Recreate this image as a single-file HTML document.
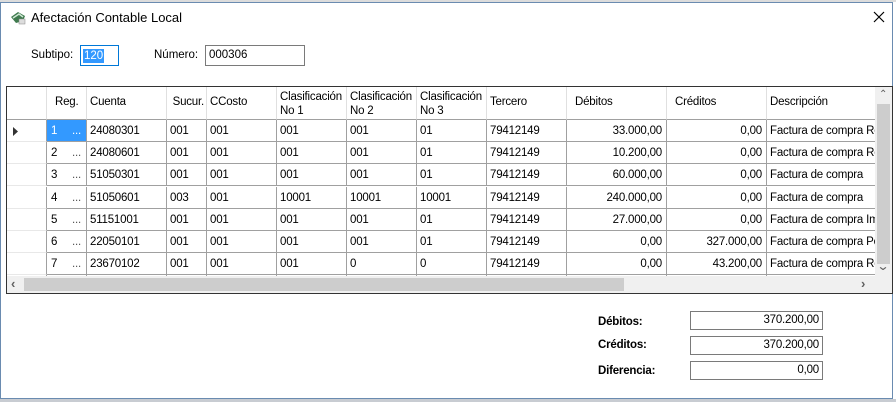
<!DOCTYPE html>
<html><head><meta charset="utf-8"><style>
*{margin:0;padding:0;box-sizing:border-box}
body{width:896px;height:402px;background:#fff;font-family:"Liberation Sans",Arial,sans-serif;font-size:11.5px;color:#000;position:relative;overflow:hidden}
.a{position:absolute}
.win{left:0;top:2px;width:893px;height:397px;border:1px solid #6a8bb0;background:#fff}
.c{position:absolute;height:22px;line-height:22px;white-space:nowrap;overflow:hidden;padding-left:3px;border-right:1px solid #a0a0a0;border-bottom:1px solid #a0a0a0;letter-spacing:-0.2px}
.r{text-align:right;padding-right:4px;padding-left:0}
.h{height:33px;line-height:14px;padding-top:3px;border-right:1px solid #e0e0e0;border-bottom:1px solid #a0a0a0}
.tb{position:absolute;border:1px solid #7a7a7a;height:19px;line-height:17px;text-align:right;padding-right:3px;background:#fff;letter-spacing:-0.2px}
.lb{position:absolute;font-weight:bold;letter-spacing:-0.2px}
</style></head><body>
<div class="a" style="left:0;top:0;width:896px;height:2px;background:#dcdcdc"></div>
<div class="a" style="left:0;top:399px;width:896px;height:3px;background:#c8ccd2"></div>
<div class="a win"></div>
<svg class="a" style="left:9px;top:9px" width="18" height="16" viewBox="0 0 18 16"><path d="M2 8 L9 3 L16 7 L14 12 L7 14 Z" fill="#3f7a4e"/><path d="M4 9 L10 5 L14 8" stroke="#cfe8d4" stroke-width="1.5" fill="none"/><rect x="10" y="10" width="6" height="5" fill="#ddd" stroke="#888" stroke-width=".5"/></svg>
<div class="a" style="left:31px;top:10px;font-size:13px">Afectación Contable Local</div>
<svg class="a" style="left:873px;top:11px" width="12" height="12"><path d="M1 1 L11 11 M11 1 L1 11" stroke="#000" stroke-width="1.2"/></svg>
<div class="a" style="left:31px;top:49px">Subtipo:</div>
<div class="a" style="left:80px;top:45px;width:39px;height:21px;border:1px solid #0078d7;background:#fff"><span style="position:absolute;left:2px;top:3px;background:#3399ff;color:#fff;line-height:14px;padding:0 1px">120</span></div>
<div class="a" style="left:154px;top:49px">Número:</div>
<div class="a" style="left:205px;top:45px;width:100px;height:21px;border:1px solid #7a7a7a;line-height:19px;padding-left:3px">000306</div>

<div class="a" style="left:6px;top:86px;width:887px;height:208px;border:1px solid #333;background:#fff;overflow:hidden">
<div id="g"></div>
</div>
<script>
var cols=[[0,40],[40,40],[80,80],[160,40],[200,70],[270,70],[340,70],[410,70],[480,80],[560,100],[660,100],[760,110]];
var hd=["","Reg.","Cuenta","Sucur.","CCosto","Clasificación<br>No 1","Clasificación<br>No 2","Clasificación<br>No 3","Tercero","Débitos","Créditos","Descripción"];
var rows=[
["1","24080301","001","001","001","001","01","79412149","33.000,00","0,00","Factura de compra Re"],
["2","24080601","001","001","001","001","01","79412149","10.200,00","0,00","Factura de compra Re"],
["3","51050301","001","001","001","001","01","79412149","60.000,00","0,00","Factura de compra"],
["4","51050601","003","001","10001","10001","10001","79412149","240.000,00","0,00","Factura de compra"],
["5","51151001","001","001","001","001","01","79412149","27.000,00","0,00","Factura de compra Imp"],
["6","22050101","001","001","001","001","01","79412149","0,00","327.000,00","Factura de compra Po"],
["7","23670102","001","001","001","0","0","79412149","0,00","43.200,00","Factura de compra Re"],
["","","","","","","","","","",""]];
var h="";
for(var i=0;i<cols.length;i++){
 var st="left:"+cols[i][0]+"px;width:"+cols[i][1]+"px;top:0;";
 var t=hd[i];
 if(t.indexOf("<br>")<0) st+="line-height:30px;padding-top:0;";
 if(i==1) st+="padding-left:8px;";
 if(i==3) st+="text-align:right;padding-right:2px;";
 if(i==9||i==10) st+="padding-left:8px;";
 h+='<div class="c h" style="'+st+'">'+t+'</div>';
}
for(var r=0;r<rows.length;r++){
 var y=33+r*22.2;
 h+='<div class="c" style="left:0;width:40px;top:'+y+'px;border-right:1px solid #a0a0a0;border-bottom:1px solid #e8e8e8">'+(r==0?'<svg width="8" height="9" style="position:absolute;left:5px;top:7px"><path d="M1 0 L6 4.5 L1 9Z" fill="#333"/></svg>':'')+'</div>';
 var sel=(r==0);
 h+='<div class="c" style="left:40px;width:40px;top:'+y+'px;padding-left:4px;'+(sel?'background:#3399ff;color:#fff;':'')+'">'+rows[r][0]+(rows[r][0]?'<span style="position:absolute;left:25px;color:'+(sel?'#fff':'#555')+'">...</span>':'')+'</div>';
 for(var i=2;i<cols.length;i++){
  var cl=(i==9||i==10)?"c r":"c";
  h+='<div class="'+cl+'" style="left:'+cols[i][0]+'px;width:'+cols[i][1]+'px;top:'+y+'px">'+rows[r][i-1]+'</div>';
 }
}
h+='<div style="position:absolute;left:868px;top:0;width:17px;height:190px;background:#f0f0f0"><div style="position:absolute;left:2px;top:17px;width:13px;height:160px;background:#cdcdcd"></div><div style="position:absolute;left:4px;top:2px;font-size:10px;color:#606060">&#8963;</div><div style="position:absolute;left:3px;top:172px;font-size:12px;color:#606060;transform:scaleX(1.3)">&#8964;</div></div>';
h+='<div style="position:absolute;left:0;top:189px;width:885px;height:18px;background:#f0f0f0"><div style="position:absolute;left:17px;top:2px;width:600px;height:13px;background:#cdcdcd"></div><div style="position:absolute;left:4px;top:0;font-size:13px;color:#606060;font-weight:bold">&lsaquo;</div><div style="position:absolute;left:854px;top:0;font-size:13px;color:#606060;font-weight:bold">&rsaquo;</div></div>';
document.getElementById("g").innerHTML=h;
</script>

<div class="lb" style="left:598px;top:316px">Débitos:</div>
<div class="tb" style="left:690px;top:311px;width:133px">370.200,00</div>
<div class="lb" style="left:598px;top:339px">Créditos:</div>
<div class="tb" style="left:690px;top:336px;width:133px">370.200,00</div>
<div class="lb" style="left:598px;top:365px">Diferencia:</div>
<div class="tb" style="left:690px;top:361px;width:133px">0,00</div>
</body></html>
